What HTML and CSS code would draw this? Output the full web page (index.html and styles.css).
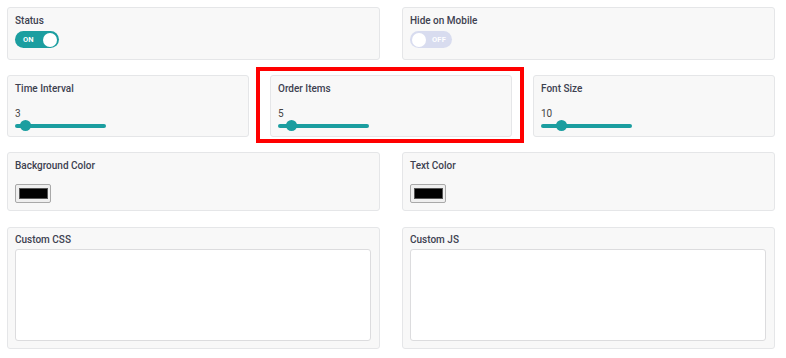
FILE: index.html
```html
<!DOCTYPE html>
<html>
<head>
<meta charset="utf-8">
<link rel="stylesheet" href="styles.css">
</head>
<body>
<div class="page">
  <div class="row cols-2 row-toggle">
    <div class="card">
      <div class="label">Status</div>
      <div class="toggle on"><span class="toggle-text">ON</span><span class="knob"></span></div>
    </div>
    <div class="card">
      <div class="label">Hide on Mobile</div>
      <div class="toggle off"><span class="knob"></span><span class="toggle-text">OFF</span></div>
    </div>
  </div>

  <div class="row cols-3 row-slider">
    <div class="card">
      <div class="label">Time Interval</div>
      <div class="value">3</div>
      <div class="slider"><div class="track"></div><div class="thumb" style="left:5px"></div></div>
    </div>
    <div class="highlight-wrap">
      <div class="card">
        <div class="label">Order Items</div>
        <div class="value">5</div>
        <div class="slider"><div class="track"></div><div class="thumb" style="left:8px"></div></div>
      </div>
      <div class="highlight"></div>
    </div>
    <div class="card">
      <div class="label">Font Size</div>
      <div class="value">10</div>
      <div class="slider"><div class="track"></div><div class="thumb" style="left:15px"></div></div>
    </div>
  </div>

  <div class="row cols-2 row-color">
    <div class="card">
      <div class="label">Background Color</div>
      <div class="swatch"><div class="swatch-inner"></div></div>
    </div>
    <div class="card">
      <div class="label">Text Color</div>
      <div class="swatch"><div class="swatch-inner"></div></div>
    </div>
  </div>

  <div class="row cols-2 row-code">
    <div class="card">
      <div class="label">Custom CSS</div>
      <textarea class="code"></textarea>
    </div>
    <div class="card">
      <div class="label">Custom JS</div>
      <textarea class="code"></textarea>
    </div>
  </div>
</div>
</body>
</html>
```

FILE: styles.css
```css
* { box-sizing: border-box; }
html, body { margin: 0; padding: 0; background: #ffffff; }
body { font-family: Roboto, "Noto Sans", "Liberation Sans", sans-serif; color: #3c434a; }

.page {
  width: 775px;
  padding: 7px 0 0 7px;
  display: flex;
  flex-direction: column;
  gap: 15px;
}

.row { display: grid; gap: 22px; }
.cols-2 { grid-template-columns: 1fr 1fr; }
.cols-3 { grid-template-columns: 1fr 1fr 1fr; gap: 22px 21px; }

.card {
  background: #f8f8f8;
  border: 1px solid #e5e6e8;
  border-radius: 3px;
  padding: 7px 8px 0 7px;
  display: flex;
  flex-direction: column;
  align-items: flex-start;
}

.row-toggle .card { height: 53px; }
.row-slider .card { height: 62px; }
.row-color .card { height: 59px; }
.row-code { margin-top: 1px; }
.row-code .card { height: 122px; padding-top: 6px; }

.label {
  font-size: 10px;
  line-height: 11px;
  font-weight: 500;
  color: #3d4150;
}

/* toggle */
.toggle {
  margin-top: 5px;
  width: 44px;
  height: 17px;
  border-radius: 9px;
  display: flex;
  align-items: center;
  padding: 0 2px;
}
.toggle.on { background: #1b9ea0; justify-content: space-between; padding-left: 8px; }
.toggle.off { background: #d8dcef; width: 42px; gap: 6px; }
.toggle-text {
  font-size: 7.5px;
  font-weight: 700;
  color: #ffffff;
  letter-spacing: 0.2px;
}
.knob {
  width: 14px;
  height: 14px;
  border-radius: 50%;
  background: #ffffff;
}

/* slider */
.value {
  margin-top: 14px;
  font-size: 10px;
  line-height: 11px;
  color: #444;
}
.slider {
  position: relative;
  margin-top: 1px;
  width: 91px;
  height: 11px;
  display: flex;
  align-items: center;
}
.track {
  width: 100%;
  height: 4px;
  border-radius: 2px;
  background: #1b9ea0;
}
.thumb {
  position: absolute;
  top: 0;
  width: 11px;
  height: 11px;
  border-radius: 50%;
  background: #1b9ea0;
}

/* highlight */
.highlight-wrap { position: relative; display: flex; flex-direction: column; }
.highlight {
  position: absolute;
  left: -14px;
  right: -12px;
  top: -8px;
  bottom: -6px;
  border: 4px solid #ff0000;
  pointer-events: none;
}

/* color swatch */
.swatch {
  margin-top: 13px;
  width: 36px;
  height: 19px;
  border: 1px solid #a9a9a9;
  border-radius: 2px;
  background: #efefef;
  display: flex;
  align-items: center;
  justify-content: center;
}
.swatch-inner {
  width: 29px;
  height: 11px;
  background: #000000;
  border: 1px solid #555;
}

/* textarea */
.code {
  margin-top: 4px;
  width: 100%;
  height: 92px;
  border: 1px solid #dcdcde;
  border-radius: 3px;
  background: #ffffff;
  resize: none;
  font-family: inherit;
  padding: 4px;
  outline: none;
}
```
